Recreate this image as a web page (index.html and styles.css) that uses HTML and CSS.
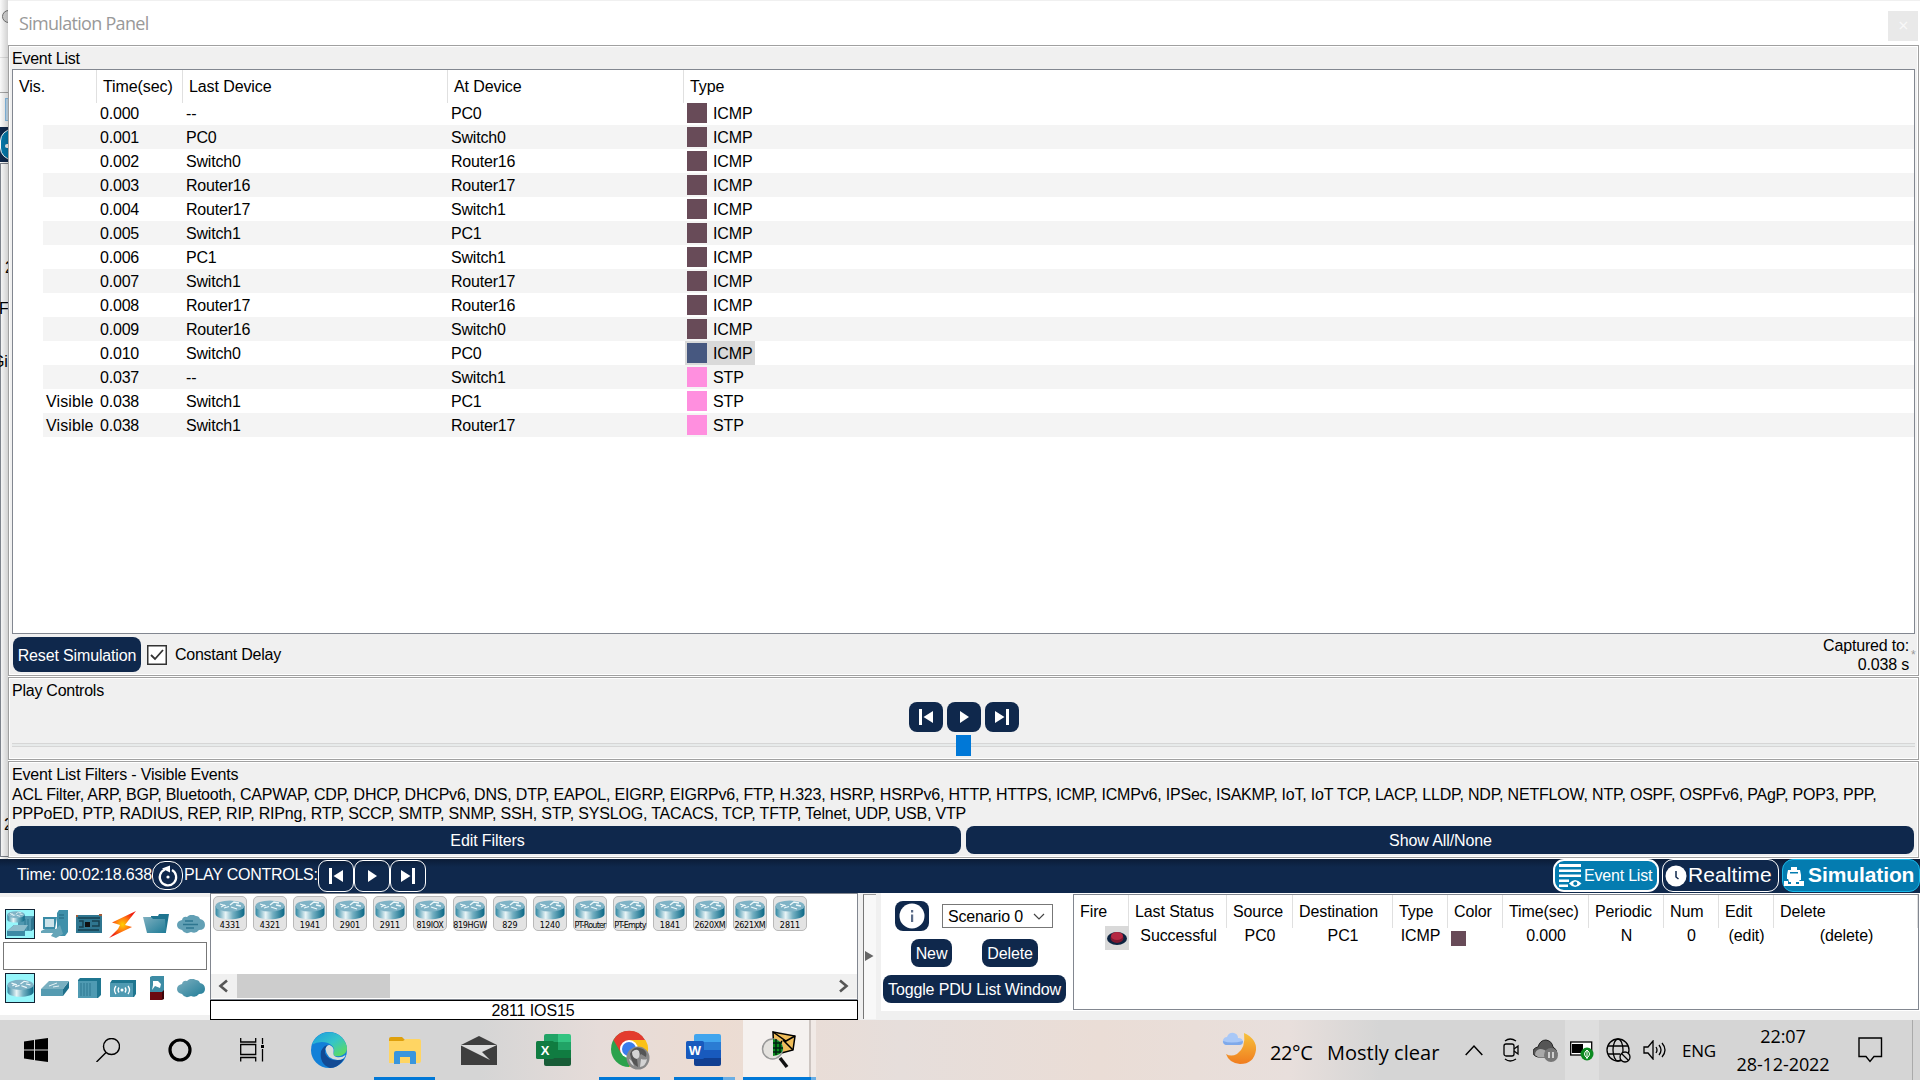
FILE: index.html
```html
<!DOCTYPE html>
<html lang="en">
<head>
<meta charset="utf-8">
<title>Simulation Panel</title>
<link rel="stylesheet" href="styles.css">
</head>
<body>
<svg class="defs" width="0" height="0">
  <defs>
    <linearGradient id="body" x1="0" x2="1"><stop offset="0" stop-color="#2f86a2"/><stop offset=".35" stop-color="#e8f4f6"/><stop offset=".6" stop-color="#74b0c2"/><stop offset="1" stop-color="#0a6785"/></linearGradient>
    <linearGradient id="teal" x1="0" y1="0" x2="1" y2="1"><stop offset="0" stop-color="#7fb0c0"/><stop offset="1" stop-color="#1f7c97"/></linearGradient>
    <linearGradient id="edgeA" x1="0" y1="0" x2="1" y2="1"><stop offset="0" stop-color="#1a9be0"/><stop offset=".5" stop-color="#35c4c9"/><stop offset="1" stop-color="#65e04a"/></linearGradient>
    <linearGradient id="moon" x1="0" y1="0" x2="0" y2="1"><stop offset="0" stop-color="#f7c23c"/><stop offset="1" stop-color="#f07c1e"/></linearGradient>
    <radialGradient id="spark"><stop offset="0" stop-color="#ffd000"/><stop offset=".5" stop-color="#ff7a10"/><stop offset="1" stop-color="#f02010"/></radialGradient>
    <symbol id="router" viewBox="0 0 30 20">
      <path d="M.5 6v8c0 7 29 7 29 0V6z" fill="url(#body)"/>
      <ellipse cx="15" cy="6" rx="14.5" ry="5.6" fill="#7fb3c6"/>
      <path d="M5 4l6 2M9 8l5-1.500M15 5l4-3 5 1M16 7l6 2M21 5l5 1M6 7l4-2" stroke="#eef8fa" stroke-width="1.300" fill="none"/>
    </symbol>
    <symbol id="prev" viewBox="0 0 16 18"><path d="M1 1h3v16H1z M15 3v12L5.500 9z" fill="#fff"/></symbol>
    <symbol id="play" viewBox="0 0 16 18"><path d="M4 3l9 6-9 6z" fill="#fff"/></symbol>
    <symbol id="next" viewBox="0 0 16 18"><path d="M12 1h3v16h-3z M1 3v12l9.500-6z" fill="#fff"/></symbol>
  </defs>
</svg>

<div class="top">
  <div class="behind">
    <i class="knob"></i><i class="rule r1"></i><i class="rule r2"></i><i class="chip"></i>
    <div class="bluebar"><i></i></div><div class="canvas"></div>
    <span class="frag f1">2</span><span class="frag f2">F</span><span class="frag f3">Gi</span><span class="frag f4">2</span>
  </div>
  <main class="panel">
    <header class="title"><span>Simulation Panel</span><i class="close">×</i></header>
    <section class="frame events">
      <h2>Event List</h2>
      <div class="table">
        <div class="thead"><span>Vis.</span><span>Time(sec)</span><span>Last Device</span><span>At Device</span><span>Type</span></div>
        <div class="tr"><span></span><span>0.000</span><span>--</span><span>PC0</span><span class="ty"><i></i>ICMP</span></div>
        <div class="tr"><span></span><span>0.001</span><span>PC0</span><span>Switch0</span><span class="ty"><i></i>ICMP</span></div>
        <div class="tr"><span></span><span>0.002</span><span>Switch0</span><span>Router16</span><span class="ty"><i></i>ICMP</span></div>
        <div class="tr"><span></span><span>0.003</span><span>Router16</span><span>Router17</span><span class="ty"><i></i>ICMP</span></div>
        <div class="tr"><span></span><span>0.004</span><span>Router17</span><span>Switch1</span><span class="ty"><i></i>ICMP</span></div>
        <div class="tr"><span></span><span>0.005</span><span>Switch1</span><span>PC1</span><span class="ty"><i></i>ICMP</span></div>
        <div class="tr"><span></span><span>0.006</span><span>PC1</span><span>Switch1</span><span class="ty"><i></i>ICMP</span></div>
        <div class="tr"><span></span><span>0.007</span><span>Switch1</span><span>Router17</span><span class="ty"><i></i>ICMP</span></div>
        <div class="tr"><span></span><span>0.008</span><span>Router17</span><span>Router16</span><span class="ty"><i></i>ICMP</span></div>
        <div class="tr"><span></span><span>0.009</span><span>Router16</span><span>Switch0</span><span class="ty"><i></i>ICMP</span></div>
        <div class="tr"><span></span><span>0.010</span><span>Switch0</span><span>PC0</span><span class="ty sel"><i></i>ICMP</span></div>
        <div class="tr"><span></span><span>0.037</span><span>--</span><span>Switch1</span><span class="ty stp"><i></i>STP</span></div>
        <div class="tr"><span>Visible</span><span>0.038</span><span>Switch1</span><span>PC1</span><span class="ty stp"><i></i>STP</span></div>
        <div class="tr"><span>Visible</span><span>0.038</span><span>Switch1</span><span>Router17</span><span class="ty stp"><i></i>STP</span></div>
      </div>
      <div class="under">
        <button class="btn reset">Reset Simulation</button>
        <svg class="check" width="20" height="20"><rect x=".75" y=".75" width="18.500" height="18.500" fill="#fff" stroke="#333" stroke-width="1.500"/><path d="M4 10l4 4 8-9" fill="none" stroke="#333" stroke-width="1.800"/></svg>
        <span class="delay">Constant Delay</span>
        <div class="captured">Captured to:<br>0.038 s</div><span class="star">*</span>
      </div>
    </section>
    <section class="frame play">
      <h2>Play Controls</h2>
      <div class="pbtns">
        <button class="btn"><svg width="16" height="18"><use href="#prev"/></svg></button>
        <button class="btn"><svg width="16" height="18"><use href="#play"/></svg></button>
        <button class="btn"><svg width="16" height="18"><use href="#next"/></svg></button>
      </div>
      <div class="slider"><i></i></div>
    </section>
    <section class="frame filters">
      <h2>Event List Filters - Visible Events</h2>
      <p class="l1">ACL Filter, ARP, BGP, Bluetooth, CAPWAP, CDP, DHCP, DHCPv6, DNS, DTP, EAPOL, EIGRP, EIGRPv6, FTP, H.323, HSRP, HSRPv6, HTTP, HTTPS, ICMP, ICMPv6, IPSec, ISAKMP, IoT, IoT TCP, LACP, LLDP, NDP, NETFLOW, NTP, OSPF, OSPFv6, PAgP, POP3, PPP,</p>
      <p class="l2">PPPoED, PTP, RADIUS, REP, RIP, RIPng, RTP, SCCP, SMTP, SNMP, SSH, STP, SYSLOG, TACACS, TCP, TFTP, Telnet, UDP, USB, VTP</p>
      <div class="fbtns"><button class="btn">Edit Filters</button><button class="btn">Show All/None</button></div>
    </section>
  </main>
</div>

<nav class="bar">
  <span class="time">Time: 00:02:18.638</span>
  <button class="obtn cyc"><svg width="22" height="24" viewBox="0 0 22 24"><path d="M8 5.500A8.200 8.200 0 1 0 15 6" fill="none" stroke="#fff" stroke-width="2.200"/><path d="M5 4.500l8-3v7z" fill="#fff"/><circle cx="11" cy="13" r="1.600" fill="#fff"/></svg></button>
  <span class="pc">PLAY CONTROLS:</span>
  <button class="obtn"><svg width="16" height="18"><use href="#prev"/></svg></button>
  <button class="obtn"><svg width="16" height="18"><use href="#play"/></svg></button>
  <button class="obtn"><svg width="16" height="18"><use href="#next"/></svg></button>
  <div class="modes">
    <button class="mode ev"><svg width="23" height="26" viewBox="0 0 23 26"><path d="M0 1h22v3H0zM0 6.500h22v2.500H0zM0 11.500h22V14H0zM0 16.500h10V19H0zM0 21.500h9V24H0z" fill="#fff"/><path d="M10 20.500q6-7 12.500 0-6.500 7-12.500 0z" fill="#fff"/><circle cx="16.300" cy="20.500" r="2" fill="#047cb0"/></svg><span>Event List</span></button>
    <button class="mode rt"><svg width="22" height="22" viewBox="0 0 22 22"><circle cx="11" cy="11" r="10.500" fill="#fff"/><path d="M11 6v6l2.500 2" stroke="#0f284c" stroke-width="1.500" fill="none"/></svg><span>Realtime</span></button>
    <button class="mode sim"><svg width="20" height="20" viewBox="0 0 20 20"><path d="M7 1h6v3h3l1 5v5h-2V9H5v4H3V9l1-5h3zM3 9h14l-2 7H5zM0 15h4v3h3v-3h5v3h3v-3h5v5H0z" fill="#fff"/><path d="M6 6h8v1.500H6z" fill="#047cb0"/></svg><span>Simulation</span></button>
  </div>
</nav>

<div class="bottom">
  <aside class="cats">
    <div class="irow">
      <i class="on"><svg width="28" height="28" viewBox="0 0 28 28"><path d="M12 8l3-2h13v13l-3 2H12z" fill="#4f97b0"/><path d="M25 9l3-3v13l-3 2z" fill="#2d7690"/><path d="M19 9v11M22 9v11" stroke="#2d7690"/><use href="#router" x="1" y="1" width="18" height="12"/><path d="M1 21l7-6h14l-3 6v5H1z" fill="#3c8aa5"/><path d="M1 21l7-6h14l-4 6z" fill="#8dbccb"/></svg></i>
      <i><svg width="28" height="28" viewBox="0 0 28 28"><path d="M16 3l2-3h9v22l-3 4h-8z" fill="#3f90aa"/><path d="M18 5h5M18 8h5" stroke="#24667e"/><path d="M2 7h14l-2 12H2z" fill="#3a8ba6"/><path d="M4 9h9v8H4z" fill="#cbe3ea"/><path d="M0 21l4-2h13l-2 4H0zM14 20l5-5 3 9-7 4-5-2z" fill="#66a5b8"/></svg></i>
      <i><svg width="26" height="20" viewBox="0 0 26 20"><path d="M0 1h26v18H0z" fill="#2f7690"/><path d="M2 4h22M2 16h21M16 7h7v5h-7M3 7h4v6H3" stroke="#17404f" stroke-width="1.500" fill="none"/><path d="M9 8h5v5H9z" fill="#111"/><path d="M0 1h2v2H0zM23 0h3v2h-3z" fill="#a35c3a"/></svg></i>
      <i><svg width="27" height="27" viewBox="0 0 27 27"><path d="M27 0L3 11.500l8 2.500-2 4L0 27l23-11-7-2 3-4z" fill="url(#spark)"/></svg></i>
      <i><svg width="27" height="20" viewBox="0 0 27 20"><path d="M8 2h7l1-2h10l-3 18H8z" fill="#1e748f"/><path d="M0 3h8l2 2h12l1 14H4z" fill="url(#teal)"/></svg></i>
      <i><svg width="28" height="19" viewBox="0 0 28 19"><path d="M5 15q-5-1-5-5t5-5q1-4 5-3 4-4 9-1 3 0 4 3 5 1 5 6t-6 5q-3 4-8 2-6 3-9-2z" fill="#62a0b5"/><path d="M8 6h8M6 9.500h15M9 13h8" stroke="#2d7690" stroke-width="1.500"/></svg></i>
    </div>
    <div class="search"></div>
    <div class="irow">
      <i class="on"><svg width="27" height="19"><use href="#router"/></svg></i>
      <i><svg width="28" height="15" viewBox="0 0 28 15"><path d="M22 8l6-8v7l-6 8z" fill="#1f6f8a"/><path d="M0 8l8-8h20l-6 8z" fill="#79afc0"/><path d="M0 8h22v7H0z" fill="#559bb1"/><path d="M8 5l8-3M12 6l6-1" stroke="#e5f2f5"/></svg></i>
      <i><svg width="23" height="20" viewBox="0 0 23 20"><path d="M0 2l2-2h21v17l-3 3H0z" fill="#1f7690"/><path d="M0 3h19v17H0z" fill="#4f9ab2"/><path d="M3 5v13M6 5v13M9 5v13M12 5v13" stroke="#2d7690"/></svg></i>
      <i><svg width="26" height="17" viewBox="0 0 26 17"><path d="M0 3l2-3h24v14l-2 3H0z" fill="#1f7690"/><path d="M0 3h23v14H0z" fill="#4f9ab2"/><circle cx="12" cy="10" r="1.500" fill="#fff"/><path d="M9 7.500q-2 2.500 0 5M15 7.500q2 2.500 0 5M6 6q-3 4 0 8M18 6q3 4 0 8" stroke="#fff" stroke-width="1.300" fill="none"/></svg></i>
      <i><svg width="16" height="24" viewBox="0 0 16 24"><path d="M1 1l2-1h12v16H1z" fill="#3d8ca5"/><path d="M1 16h12v8H1z" fill="#6b0a10"/><path d="M13 16l2-2v9l-2 1z" fill="#3a0408"/><path d="M4 5h5l3 3-1 4-5-2-3 4 1-5z" fill="#fff"/></svg></i>
      <i><svg width="28" height="19" viewBox="0 0 28 19"><path d="M5 15q-5-1-5-5t5-5q1-4 5-3 4-4 9-1 3 0 4 3 5 1 5 6t-6 5q-3 4-8 2-6 3-9-2z" fill="url(#teal)"/></svg></i>
    </div>
  </aside>

  <div class="devices">
    <div class="list">
      <div class="drow">
        <b><svg width="30" height="20"><use href="#router"/></svg>4331</b><b><svg width="30" height="20"><use href="#router"/></svg>4321</b><b><svg width="30" height="20"><use href="#router"/></svg>1941</b><b><svg width="30" height="20"><use href="#router"/></svg>2901</b><b><svg width="30" height="20"><use href="#router"/></svg>2911</b><b class="n"><svg width="30" height="20"><use href="#router"/></svg>819IOX</b><b class="n"><svg width="30" height="20"><use href="#router"/></svg>819HGW</b><b><svg width="30" height="20"><use href="#router"/></svg>829</b><b><svg width="30" height="20"><use href="#router"/></svg>1240</b><b class="t"><svg width="30" height="20"><use href="#router"/></svg>PT-Router</b><b class="t"><svg width="30" height="20"><use href="#router"/></svg>PT-Empty</b><b><svg width="30" height="20"><use href="#router"/></svg>1841</b><b class="n"><svg width="30" height="20"><use href="#router"/></svg>2620XM</b><b class="n"><svg width="30" height="20"><use href="#router"/></svg>2621XM</b><b><svg width="30" height="20"><use href="#router"/></svg>2811</b>
      </div>
      <div class="scroll">
        <svg width="26" height="24"><path d="M16 6.500L9.500 12l6.500 5.500" fill="none" stroke="#555" stroke-width="2.600"/></svg><i></i>
        <svg class="rgt" width="26" height="24"><path d="M9 6.500l6.500 5.500L9 17.500" fill="none" stroke="#555" stroke-width="2.600"/></svg>
      </div>
    </div>
    <div class="dname">2811 IOS15</div>
  </div>
  <div class="split"><svg width="9" height="10"><path d="M0 0l8.500 5L0 10z" fill="#666"/></svg></div>

  <div class="scen">
    <div class="controls">
      <div class="c1"><button class="btn info"><svg width="26" height="26" viewBox="0 0 26 26"><circle cx="13" cy="13" r="12.500" fill="#fff"/><path d="M12 7h2.200v2.400H12zM12 11.500h2.200V19H12z" fill="#5b6c88"/></svg></button>
      <div class="select">Scenario 0<svg width="12" height="8"><path d="M1 1l5 5 5-5" fill="none" stroke="#444" stroke-width="1.200"/></svg></div></div>
      <div class="c2"><button class="btn">New</button><button class="btn">Delete</button></div>
      <button class="btn toggle">Toggle PDU List Window</button>
    </div>
    <div class="pdu">
      <div class="ph"><span>Fire</span><span>Last Status</span><span>Source</span><span>Destination</span><span>Type</span><span>Color</span><span>Time(sec)</span><span>Periodic</span><span>Num</span><span>Edit</span><span>Delete</span></div>
      <div class="pr"><span class="fire"><svg width="24" height="24"><ellipse cx="12" cy="12.500" rx="10" ry="6.500" fill="#0c2340"/><ellipse cx="12" cy="12" rx="6.500" ry="5" fill="#7d1830"/><ellipse cx="12" cy="10" rx="6" ry="4" fill="#b52842"/></svg></span><span>Successful</span><span>PC0</span><span>PC1</span><span>ICMP</span><span class="col"><i></i></span><span>0.000</span><span>N</span><span>0</span><span>(edit)</span><span>(delete)</span></div>
    </div>
  </div>
</div>

<footer class="task">
  <i><svg width="24" height="24"><path d="M0 3.500L10 2v9.500H0zM11 1.800L24 0v11.500H11zM0 12.500h10V22L0 20.500zM11 12.500h13V24l-13-1.800z"/></svg></i>
  <i><svg width="24" height="24" fill="none" stroke="#000" stroke-width="1.400"><circle cx="15.500" cy="8.500" r="8"/><path d="M10 14.500L.5 24"/></svg></i>
  <i><svg width="24" height="24"><circle cx="12" cy="12" r="10" fill="none" stroke="#000" stroke-width="3.200"/></svg></i>
  <i><svg width="24" height="24" fill="none" stroke="#000" stroke-width="1.300"><path d="M.7 0v4h15V0M.7 6.500h15v10H.7zM.7 23.500v-4h15v4M22.500 0v6M22.500 11v12.500"/><path d="M21 7h3v3h-3z" fill="#000" stroke="none"/></svg></i>
  <i class="wd"><svg width="36" height="36" viewBox="0 0 36 36"><circle cx="18" cy="18" r="18" fill="#1280d8"/><path d="M1 13C5-1 24-4 32 7q6 8 3 13-3 5-11 4-3-1-1-4 1-6-6-9-8-3-17 2z" fill="url(#edgeA)"/><path d="M10 19q3-6 7-6-5 5-2 10 5 8 18 4-6 9-14 9-11-4-9-17z" fill="#124a94"/><path d="M14.500 17q1-4 4-4 5 2 4 7-1 4 3 5 5 1 9-2-1 5-8 5-11-1-12-11z" fill="#d9dcdc"/></svg></i>
  <i class="wd run"><svg width="32" height="27"><path d="M0 2q0-2 2-2h11l3 3v5H0z" fill="#dfa00c"/><path d="M0 4h14l3-2h13q2 0 2 2v20q0 2-2 2H0z" fill="#ffd563"/><path d="M5 27V16q0-2 2-2h18q2 0 2 2v11h-6v-7H11v7z" fill="#3a96dd"/></svg></i>
  <i class="wd"><svg width="36" height="29"><path d="M0 9l18-9 18 9v20H0z" fill="#3e3e3e"/><path d="M0 9h36L21 16l8 8L0 9.500z" fill="#dcdcdc"/></svg></i>
  <i class="wd"><svg width="35" height="32" viewBox="0 0 35 32"><path d="M8 2q0-2 2-2h12v8H8z" fill="#21a366"/><path d="M22 0h11q2 0 2 2v6H22z" fill="#33c481"/><path d="M8 8h14v8H8z" fill="#107c41"/><path d="M22 8h13v8H22z" fill="#21a366"/><path d="M8 16h27v8H8z" fill="#107c41"/><path d="M8 24h27v6q0 2-2 2H10q-2 0-2-2z" fill="#185c37"/><rect y="7" width="18" height="18" rx="1.500" fill="#107c41"/><text x="9" y="21" text-anchor="middle" class="app">X</text></svg></i>
  <i class="wd run"><svg width="40" height="40" viewBox="0 0 40 40"><circle cx="19" cy="19" r="18" fill="#2ba24c"/><path d="M3.500 10A18 18 0 0 1 35 10L19 11l-8 12z" fill="#e33b2e"/><path d="M19 10h16.500A18 18 0 0 1 19 37l8-14z" fill="#fbc116"/><circle cx="19" cy="19" r="9" fill="#fff"/><circle cx="19" cy="19" r="7" fill="#3a7cec"/><circle cx="28" cy="28" r="11.500" fill="#888"/><path d="M20 24q3-8 10-6 8 2 6 9l-5-3-4 5 1 8q-6-2-8-13z" fill="#555"/><path d="M22 22q4-4 7-1 2 6-2 8-5-1-5-7zM31 29q4 1 6 0-1 7-7 8zM19 29q3 1 5 7-4-2-5-7z" fill="#d4d4d4"/></svg></i>
  <i class="wd run half"><svg width="35" height="32" viewBox="0 0 35 32"><path d="M8 2q0-2 2-2h23q2 0 2 2v6H8z" fill="#41a5ee"/><path d="M8 8h27v8H8z" fill="#2b7cd3"/><path d="M8 16h27v8H8z" fill="#185abd"/><path d="M8 24h27v6q0 2-2 2H10q-2 0-2-2z" fill="#103f91"/><rect y="7" width="18" height="18" rx="1.500" fill="#185abd"/><text x="9" y="21" text-anchor="middle" class="app">W</text></svg></i>
  <i class="act"><svg width="36" height="38" viewBox="0 0 36 38"><path d="M12 1l22 4-2 14-19 5z" fill="#f0bd5a" stroke="#000" stroke-width="1.500"/><path d="M12 1l13 9 9-5M22 9l10 10M21 10l-8 12" stroke="#000" stroke-width="1.500" fill="none"/><circle cx="11.500" cy="18" r="10" fill="#e4e2de" stroke="#999" stroke-width="1.500"/><path d="M12 8q9 1 10 10-1 6-10 7z" fill="#0a8a1c"/><path d="M12 12h9M12 17h10M12 21h8M15 8v16M19 11v11" stroke="#021" stroke-width="1.500"/><path d="M19 27l7 9" stroke="#111" stroke-width="3.500"/></svg></i>
  <div class="weather"><svg width="36" height="36" viewBox="0 0 36 36"><path d="M22 2q13 6 12 17-2 14-16 14-11-1-14-10 5 3 11 0 9-6 7-21z" fill="url(#moon)"/><path d="M4 14q-4-1-3-5 1-3 4-3 2-5 7-4 4 1 4 5 5 0 5 4 0 3-4 3z" fill="#a9c8f7"/><path d="M4 14q-3-1-3-4 8 3 20 0 0 4-4 4z" fill="#7fa9ea"/></svg><span class="deg">22°C</span><span class="sky">Mostly clear</span></div>
  <div class="tray">
    <svg class="s1" width="18" height="12"><path d="M.7 11L9 2l8.300 9" fill="none" stroke="#000" stroke-width="1.500"/></svg>
    <svg class="s2" width="17" height="24" fill="none" stroke="#000" stroke-width="1.300"><rect x="1" y="6" width="10" height="12" rx="2"/><path d="M11 11l4-3v8l-4-3M2 3q5-4 11 0M2 21q5 4 11 0"/></svg>
    <svg class="s3" width="25" height="24"><path d="M5 19q-5-1-5-5t5-5q2-7 8-7 6 1 7 7 4 2 4 7l-3 3z" fill="#555" stroke="#222"/><path d="M2 17q0-5 5-6 5 0 8 4l4 4H5z" fill="#a9a9a9"/><circle cx="18" cy="17" r="7" fill="#777"/><path d="M16 14v6M20 14v6" stroke="#fff" stroke-width="1.300"/></svg>
    <div class="bat"><svg width="24" height="22"><rect x=".7" y="3" width="21" height="13" fill="#fff" stroke="#000" stroke-width="1.300"/><path d="M2 5h11v9H2z"/><circle cx="17" cy="15" r="6.500" fill="#0b8a20"/><path d="M17 11q-5 4 0 8 5-4 0-8v9" fill="none" stroke="#fff"/></svg></div>
    <svg class="s5" width="25" height="25" fill="none" stroke="#000" stroke-width="1.300"><circle cx="12" cy="12" r="11"/><ellipse cx="12" cy="12" rx="5" ry="11"/><path d="M2 8h20M2 16h12"/><circle cx="19" cy="19" r="5" fill="#d5d5d5"/><path d="M15.500 15.500l7 7"/></svg>
    <svg class="s6" width="24" height="20" fill="none" stroke="#000" stroke-width="1.300"><path d="M1 7h4l5-6v18l-5-6H1zM13 7q2 3 0 6M16 5q4 5 0 10M19 3q6 7 0 14"/></svg>
    <span class="eng">ENG</span>
    <div class="clock"><span>22:07</span><span>28-12-2022</span></div>
    <svg class="s7" width="25" height="26"><path d="M1 1h22.500v18.500H16l-4 5-4-5H1z" fill="none" stroke="#000" stroke-width="1.400"/></svg>
  </div>
</footer>
</body>
</html>
```
FILE: styles.css
```css
* { box-sizing: border-box; }
body { margin: 0; width: 1920px; height: 1080px; overflow: hidden; background: #f0f0f0; color: #000; font: 16px/18px "Liberation Sans", Arial, sans-serif; white-space: nowrap; letter-spacing: -0.1px; }
h2, p { margin: 0; font-size: 16px; font-weight: 400; }
button { font: inherit; letter-spacing: inherit; padding: 0; margin: 0; }
svg { display: block; flex: none; }
i { font-style: normal; }
.defs { position: absolute; }

/* Strip of the main window visible left of the panel */
.top { display: flex; height: 859px; }
.behind { position: relative; width: 8px; overflow: hidden; background: #fff; }
.behind::after { content: ""; position: absolute; inset: 0; background: linear-gradient(90deg, rgba(0,0,0,.02), rgba(0,0,0,.18)); }
.knob { position: absolute; left: 2px; top: 10px; width: 13px; height: 13px; border: 1px solid #777; border-radius: 50%; background: #ddd; }
.rule { position: absolute; left: 0; width: 8px; height: 1px; }
.r1 { top: 57px; background: #e4e4e4; }
.r2 { top: 92px; background: #aaa; }
.chip { position: absolute; left: 5px; top: 98px; width: 8px; height: 23px; border: 1px solid #8cc4ee; background: #cde6f9; }
.bluebar { position: absolute; top: 127px; left: 0; width: 8px; height: 35px; background: #0f284c; }
.bluebar i { position: absolute; left: 0; top: 2px; width: 30px; height: 31px; border-radius: 12px; border: 1px solid #fff; background: #047cb0; }
.bluebar i::after { content: ""; position: absolute; left: 4px; top: 14px; width: 6px; height: 4px; background: #fff; border-radius: 2px; }
.canvas { position: absolute; top: 163px; left: 0; width: 9px; height: 694px; border: 1px solid #828790; border-right: 0; }
.frag { position: absolute; }
.f1 { left: 5px; top: 259px; }
.f2 { left: -1px; top: 300px; }
.f3 { left: -8px; top: 353px; }
.f4 { left: 4px; top: 816px; }

.panel { flex: 1; display: flex; flex-direction: column; gap: 1px; background: #fff; border-top: 1px solid #f0f0f0; }
.title { height: 43px; display: flex; align-items: center; padding: 0 2px 0 11px; color: #999; font: 18px/24px "Open Sans", "Noto Sans", sans-serif; letter-spacing: -0.7px; justify-content: space-between; }
.title span { padding-top: 1px; }
.close { width: 30px; height: 30px; margin-top: 6px; background: #e9e9e9; color: #f8f8f8; text-align: center; line-height: 28px; }
.frame { width: 1911px; background: #f0f0f0; border: 1px solid #a0a0a0; box-shadow: inset 0 0 0 1px #fff; padding: 0 3px; }
.events { height: 631px; padding-top: 3px; }
.events h2 { height: 20px; line-height: 20px; letter-spacing: -0.25px; }
.table { height: 565px; border: 1px solid #828790; background: #fff; }
.thead { display: grid; grid-template-columns: 84px 86px 265px 236px 1fr; height: 31px; line-height: 33px; }
.thead span { padding-left: 6px; border-right: 1px solid #e0e0e0; }
.thead span:last-child { border: 0; }
.tr { display: grid; grid-template-columns: 54px 86px 265px 237px 1fr; height: 24px; line-height: 26px; margin-left: 30px; }
.tr:nth-child(odd) { background: #f4f4f4; }
.tr span { padding-left: 3px; height: 24px; letter-spacing: -0.2px; }
.tr span:first-child { letter-spacing: 0.1px; }
.tr .ty { display: flex; align-items: flex-start; gap: 6px; width: 70px; padding: 0 0 0 2px; letter-spacing: -0.1px; }
.ty i { width: 20px; height: 20px; margin-top: 2px; background: #684b58; }
.tr .sel { background: #d9d9d9; }
.sel i { background: #475880; }
.stp i { background: #ff8fdf; }
.under { display: flex; align-items: center; height: 41px; padding: 0 3px 0 1px; }
.btn { background: #0f284c; color: #fff; border: 0; border-radius: 8px; display: flex; align-items: center; justify-content: center; }
.reset { width: 128px; height: 35px; padding: 2px 0 0 0; letter-spacing: -0.15px; }
.check { margin: 0 8px 0 6px; }
.delay { letter-spacing: -0.25px; }
.captured { margin-left: auto; text-align: right; line-height: 19px; margin-right: 2px; letter-spacing: -0.18px; }
.star { width: 1px; color: #999; font-size: 12px; }
.play { height: 83px; padding-top: 3px; }
.play h2 { height: 21px; line-height: 20px; letter-spacing: -0.25px; }
.pbtns { display: flex; justify-content: center; gap: 4px; height: 33px; padding-left: 1px; }
.pbtns .btn { width: 34px; height: 30px; }
.slider { height: 21px; display: flex; align-items: center; justify-content: center; background: linear-gradient(#d6d6d6, #d6d6d6) 0 8px/100% 1px no-repeat, linear-gradient(#e7eaea, #e7eaea) 0 9px/100% 2px no-repeat, linear-gradient(#d6d6d6, #d6d6d6) 0 11px/100% 1px no-repeat; }
.slider i { width: 15px; height: 21px; background: #0078d7; }
.filters { height: 97px; padding-top: 3px; }
.filters h2 { height: 19px; line-height: 19px; letter-spacing: -0.18px; }
.filters p { height: 19px; line-height: 21px; }
.l1 { letter-spacing: -0.198px; }
.l2 { letter-spacing: -0.19px; }
.fbtns { display: grid; grid-template-columns: 1fr 1fr; gap: 5px; padding: 4px 1px 0; }
.fbtns .btn { height: 28px; padding: 1px 0 0 1px; }

.bar { height: 34px; background: linear-gradient(#0b1c37, #0f284c 8px); display: flex; align-items: center; color: #fff; padding: 0 0 1px 17px; }
.bar > span { padding-bottom: 2px; }
.time { width: 135px; letter-spacing: -0.12px; }
.obtn { width: 36px; height: 32px; border: 1px solid #fff; border-radius: 9px; background: none; display: flex; align-items: center; justify-content: center; }
.cyc { width: 31px; height: 29px; border-radius: 13px; }
.pc { width: 135px; padding-left: 1px; letter-spacing: -0.25px; }
.modes { margin-left: auto; display: flex; gap: 3px; align-items: center; }
.mode { height: 33px; border: 1px solid #fff; border-radius: 11px; color: #fff; background: #0f284c; display: flex; align-items: center; }
.ev { width: 106px; background: #047cb0; border-width: 2px; padding-left: 4px; gap: 2px; letter-spacing: -0.2px; }
.rt { width: 117px; font-size: 21px; padding-left: 2px; gap: 1px; letter-spacing: 0.1px; }
.rt span, .sim span { padding-bottom: 2px; }
.sim { width: 138px; background: #047cb0; border: 1px solid #19b8e8; font-size: 21px; font-weight: 700; padding-left: 1px; gap: 4px; }

.bottom { display: flex; height: 127px; }
.cats { width: 210px; height: 122px; border-top: 4px solid #f0f0f0; background: #fff; padding: 11px 3px 0; }
.irow { display: grid; grid-template-columns: 34px 36px 32px 35px 33px 35px; height: 32px; align-items: center; }
.irow i { display: flex; justify-content: center; align-items: center; height: 30px; }
.irow .on { width: 30px; margin-left: 2px; border: 1px solid #123; background: #96f6fb; }
.search { width: 204px; height: 28px; border: 1px solid #777; margin: 2px 0; }
.devices { width: 648px; }
.list { height: 107px; border: 1px solid #828790; background: #fff; display: flex; flex-direction: column; justify-content: space-between; padding: 2px 0 1px; }
.drow { display: flex; gap: 6px; padding-left: 2px; }
.drow b { width: 34px; height: 35px; border: 1px solid #b9b9b9; border-radius: 5px; background: #e3e3e3; display: flex; flex-direction: column; align-items: center; font: 8px/9px "DejaVu Sans", sans-serif; letter-spacing: 0; padding-top: 3px; }
.drow svg { margin-bottom: 1px; }
.drow .n { font-size: 8px; letter-spacing: -0.3px; }
.drow .t { letter-spacing: -0.8px; }
.scroll { height: 24px; display: flex; background: #f0f0f0; }
.scroll i { width: 153px; background: #cdcdcd; }
.rgt { margin-left: auto; }
.dname { height: 20px; border: 1px solid #000; background: #fff; text-align: center; line-height: 20px; padding-right: 2px; }
.split { width: 13px; margin: 1px 0 1px 5px; border-left: 1px solid #777; border-top: 1px solid #999; background: #f8f8f8; display: flex; align-items: center; padding: 0 0 3px 1px; }
.scen { margin-left: 5px; width: 1039px; height: 118px; background: #fff; display: flex; }
.controls { width: 192px; padding: 8px 7px 0 2px; }
.c1 { display: flex; align-items: center; gap: 13px; padding-left: 12px; }
.info { width: 34px; height: 30px; }
.select { width: 111px; height: 24px; border: 1px solid #777; display: flex; align-items: center; justify-content: space-between; padding: 1px 7px 0 5px; letter-spacing: -0.15px; }
.c2 { display: flex; gap: 30px; padding: 8px 0 8px 28px; }
.c2 .btn { height: 28px; width: 41px; padding-top: 1px; }
.c2 .btn:last-child { width: 56px; }
.toggle { width: 183px; height: 28px; padding-top: 1px; letter-spacing: -0.15px; }
.pdu { width: 846px; height: 116px; margin-top: 1px; border: 1px solid #828790; }
.ph, .pr { display: grid; grid-template-columns: 55px 98px 66px 100px 55px 55px 86px 75px 55px 55px 144px; }
.ph { height: 31px; line-height: 33px; }
.ph span { border-right: 1px solid #e0e0e0; padding-left: 6px; }
.pr { height: 24px; line-height: 19px; text-align: center; }
.pr span:nth-child(2), .pr span:last-child { padding-left: 1px; }
.fire { justify-self: end; background: #d9d9d9; height: 24px; }
.col i { display: block; width: 15px; height: 15px; margin: 5px 0 0 3px; background: #684b58; }

.task { height: 60px; display: flex; align-items: stretch; background: linear-gradient(90deg, #d5d5d5 0, #d5d5d5 480px, #e6dcd9 600px, #ecdcd2 720px, #e6dedb 900px, #eaddd6 1100px, #e8dfdc 1290px, #d5d5d5 1380px); }
.task > i { width: 72px; display: flex; align-items: center; justify-content: center; }
.task > .wd { width: 75px; }
.task > i:nth-child(5) { margin-left: 4px; padding-right: 2px; }
.task > i:nth-child(7), .task > i:nth-child(8), .task > i:nth-child(10) { padding-right: 2px; }
.task .run { background: linear-gradient(#0078d7, #0078d7) 7px 57px/61px 3px no-repeat; }
.task .half { background: linear-gradient(#0078d7, #0078d7) 7px 57px/49px 3px no-repeat, linear-gradient(#6aaee4, #6aaee4) 56px 57px/12px 3px no-repeat; }
.task > .act { width: 73px; margin-left: 1px; padding-right: 2px; background: linear-gradient(#6aaee4, #6aaee4) 68px 57px/5px 3px no-repeat, linear-gradient(90deg, #0078d7, #0078d7) 0 57px/68px 3px no-repeat, linear-gradient(90deg, #f5f1ef 66px, #cdc5c1 66px, #cdc5c1 68px, #f1eae6 68px); }
.app { font: 700 13px "Liberation Sans", Arial, sans-serif; fill: #fff; letter-spacing: 0; }
.weather { margin-left: 406px; display: flex; align-items: center; font: 20px/24px "Open Sans", "Noto Sans", sans-serif; width: 242px; }
.deg { margin: 5px 0 0 12px; width: 57px; letter-spacing: -0.4px; }
.sky { margin-top: 5px; letter-spacing: 0.02px; }
.weather svg { margin-bottom: 2px; }
.tray { display: flex; align-items: center; flex: 1; font: 17px/20px "Open Sans", "Noto Sans", sans-serif; letter-spacing: -0.3px; background: linear-gradient(#aaa, #aaa) 448px 0/1px 60px no-repeat; }
.s1 { margin: 0 20px 0 1px; }
.s2 { margin-right: 13px; }
.s3 { margin-right: 7px; }
.bat { width: 34px; align-self: stretch; background: #dedede; margin-right: 7px; display: flex; align-items: center; justify-content: center; }
.s5 { margin-right: 12px; }
.s6 { margin-right: 15px; }
.eng { width: 54px; padding-top: 1px; }
.clock { width: 94px; display: flex; flex-direction: column; align-items: center; gap: 8px; font-size: 18px; letter-spacing: -0.1px; }
.s7 { margin-left: 28px; }
```
